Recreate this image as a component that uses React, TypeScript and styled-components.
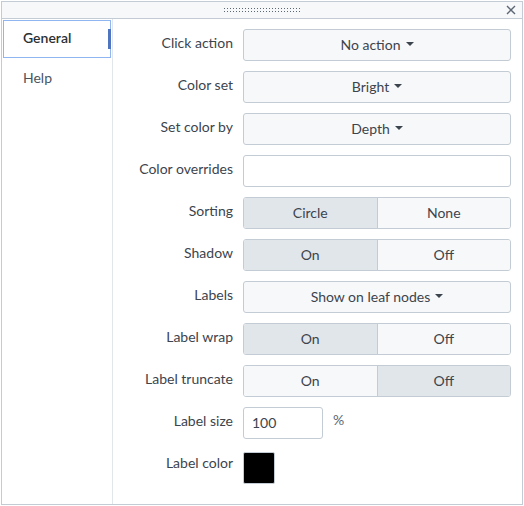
import styled, { createGlobalStyle } from 'styled-components';

const GlobalStyle = createGlobalStyle`
  body {
    margin: 0;
    background: #fff;
    font-family: Lato, "Open Sans", "Liberation Sans", sans-serif;
    color: #3c444d;
  }
`;

type Option = { label: string; active?: boolean };

const DropdownRow = ({ label, value }: { label: string; value: string }) => (
  <Row>
    <Label>{label}</Label>
    <SelectButton>
      {value}
      <Caret />
    </SelectButton>
  </Row>
);

const ToggleRow = ({ label, options }: { label: string; options: Option[] }) => (
  <Row>
    <Label>{label}</Label>
    <ToggleGroup>
      {options.map((o) => (
        <ToggleButton key={o.label} $active={o.active}>
          {o.label}
        </ToggleButton>
      ))}
    </ToggleGroup>
  </Row>
);

const App = (): JSX.Element => (
  <>
    <GlobalStyle />
    <Panel>
      <Header>
        <DragHandle />
        <CloseButton>
          <svg width="10" height="10" viewBox="0 0 10 10">
            <path d="M1 1L9 9M9 1L1 9" stroke="#5c6773" strokeWidth="1.4" />
          </svg>
        </CloseButton>
      </Header>
      <Body>
        <Sidebar>
          <Tab $active>General</Tab>
          <Tab>Help</Tab>
        </Sidebar>
        <Form>
          <DropdownRow label="Click action" value="No action" />
          <DropdownRow label="Color set" value="Bright" />
          <DropdownRow label="Set color by" value="Depth" />
          <Row>
            <Label>Color overrides</Label>
            <TextBox />
          </Row>
          <ToggleRow
            label="Sorting"
            options={[{ label: 'Circle', active: true }, { label: 'None' }]}
          />
          <ToggleRow
            label="Shadow"
            options={[{ label: 'On', active: true }, { label: 'Off' }]}
          />
          <DropdownRow label="Labels" value="Show on leaf nodes" />
          <ToggleRow
            label="Label wrap"
            options={[{ label: 'On', active: true }, { label: 'Off' }]}
          />
          <ToggleRow
            label="Label truncate"
            options={[{ label: 'On' }, { label: 'Off', active: true }]}
          />
          <Row>
            <Label>Label size</Label>
            <NumberBox>100</NumberBox>
            <Unit>%</Unit>
          </Row>
          <Row>
            <Label>Label color</Label>
            <Swatch />
          </Row>
        </Form>
      </Body>
    </Panel>
  </>
);

export default App;

const Panel = styled.div`
  margin: 1px;
  width: 520px;
  height: 502px;
  border: 1px solid #c3cbd4;
  display: flex;
  flex-direction: column;
  font-size: 14px;
`;

const Header = styled.div`
  position: relative;
  height: 16px;
  flex: none;
  background: #f7f8fa;
  border-bottom: 1px solid #c3cbd4;
  display: flex;
  align-items: center;
  justify-content: center;
`;

const DragHandle = styled.div`
  width: 78px;
  height: 6px;
  background-image: radial-gradient(circle, #5c6773 0.9px, transparent 1px);
  background-size: 3px 3px;
  background-position: 0 0;
`;

const CloseButton = styled.div`
  position: absolute;
  right: 6px;
  top: 3px;
  width: 10px;
  height: 10px;
  display: flex;
`;

const Body = styled.div`
  flex: 1;
  display: flex;
`;

const Sidebar = styled.div`
  width: 111px;
  box-sizing: border-box;
  flex: none;
  border-right: 1px solid #e1e6eb;
  padding: 1px 1px 0 1px;
  display: flex;
  flex-direction: column;
`;

const Tab = styled.div<{ $active?: boolean }>`
  position: relative;
  height: 38px;
  box-sizing: border-box;
  padding: 0 0 3px 19px;
  display: flex;
  align-items: center;
  font-size: 14px;
  color: ${(p) => (p.$active ? '#2b3033' : '#4b545e')};
  font-weight: ${(p) => (p.$active ? 600 : 400)};
  border: 1px solid ${(p) => (p.$active ? '#8fb6f0' : 'transparent')};
  margin-bottom: 2px;
  &::after {
    content: '';
    display: ${(p) => (p.$active ? 'block' : 'none')};
    position: absolute;
    right: -1px;
    top: 8px;
    width: 3px;
    height: 20px;
    background: #4f75c0;
  }
`;

const Form = styled.div`
  flex: 1;
  padding: 10px 10px 0 0;
  display: flex;
  flex-direction: column;
  gap: 10px;
`;

const Row = styled.div`
  display: flex;
  align-items: flex-start;
  gap: 10px;
  min-height: 32px;
`;

const Label = styled.div`
  width: 120px;
  flex: none;
  text-align: right;
  line-height: 20px;
  padding-top: 4px;
  font-size: 14px;
  color: #3c444d;
`;

const controlBase = `
  box-sizing: border-box;
  height: 32px;
  border: 1px solid #c3cbd4;
  border-radius: 3px;
  font-family: inherit;
  font-size: 14px;
  color: #3c444d;
  padding-bottom: 2px;
`;

const SelectButton = styled.div`
  ${controlBase}
  width: 268px;
  background: #f7f8fa;
  display: flex;
  align-items: center;
  justify-content: center;
  gap: 5px;
`;

const Caret = styled.span`
  width: 0;
  height: 0;
  border-left: 4px solid transparent;
  border-right: 4px solid transparent;
  border-top: 4px solid #3c444d;
`;

const TextBox = styled.div`
  ${controlBase}
  width: 268px;
  background: #fff;
`;

const ToggleGroup = styled.div`
  ${controlBase}
  padding-bottom: 0;
  width: 268px;
  display: flex;
  overflow: hidden;
`;

const ToggleButton = styled.div<{ $active?: boolean }>`
  flex: 1;
  display: flex;
  align-items: center;
  justify-content: center;
  padding-bottom: 2px;
  background: ${(p) => (p.$active ? '#e1e6eb' : '#f7f8fa')};
  & + & {
    border-left: 1px solid #c3cbd4;
  }
`;

const NumberBox = styled.div`
  ${controlBase}
  width: 80px;
  background: #fff;
  display: flex;
  align-items: center;
  padding-left: 8px;
`;

const Unit = styled.div`
  line-height: 20px;
  padding-top: 3px;
  font-size: 14px;
  color: #5c6773;
`;

const Swatch = styled.div`
  margin-top: 3px;
  width: 32px;
  height: 32px;
  box-sizing: border-box;
  background: #000;
  border: 1px solid #c3cbd4;
  border-radius: 2px;
`;
